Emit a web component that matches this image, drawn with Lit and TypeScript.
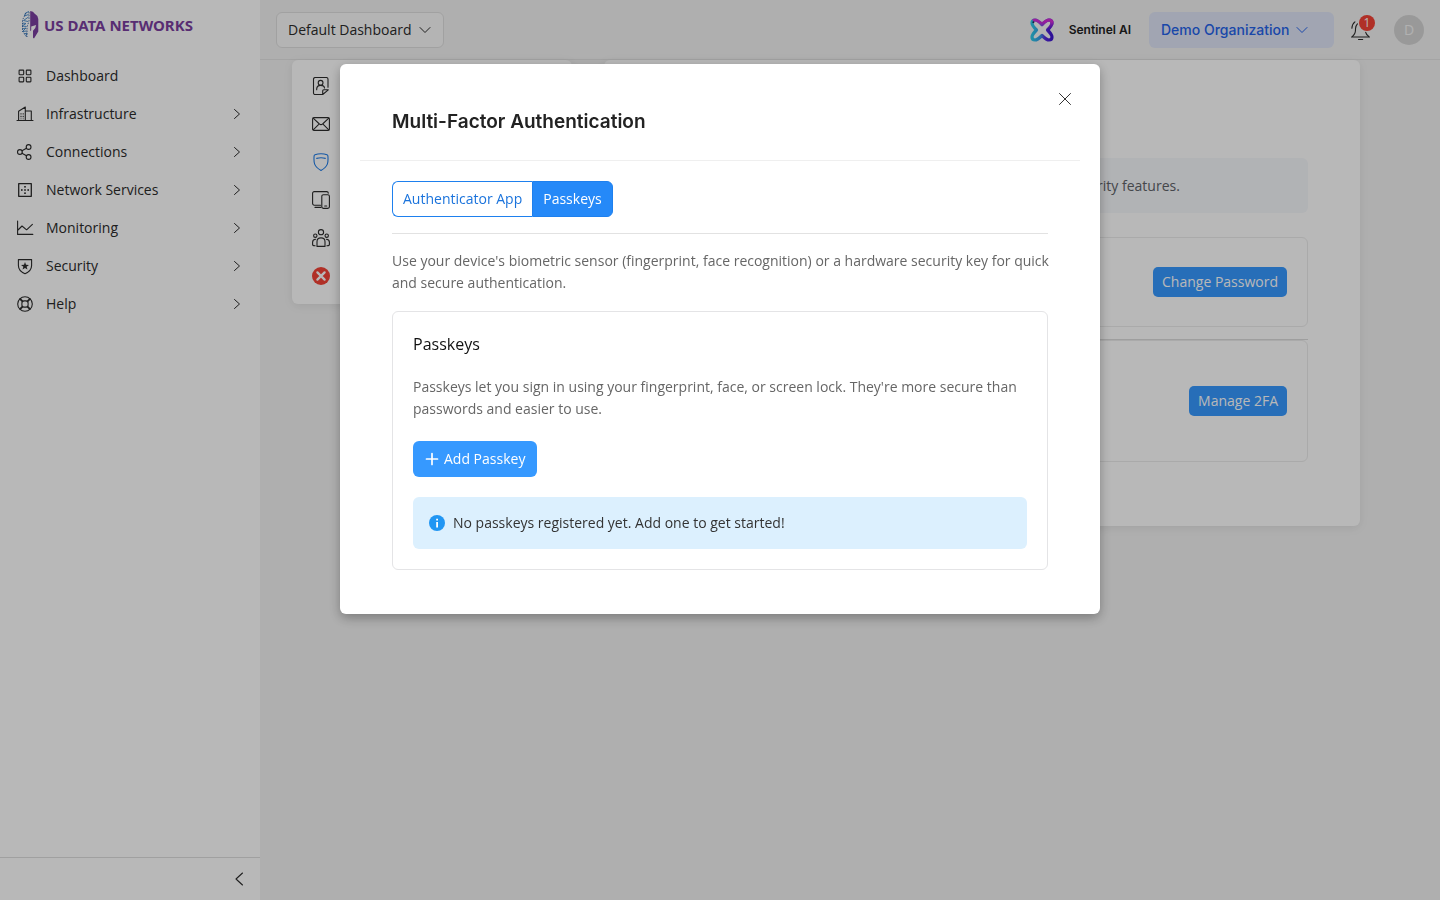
import { LitElement, html, css, svg, TemplateResult, SVGTemplateResult } from "lit";
import { customElement, state } from "lit/decorators.js";

const icon = (cls: string, size: number, body: SVGTemplateResult): TemplateResult => html`
  <svg class="icon ${cls}" width=${size} height=${size} viewBox="0 0 ${size} ${size}" aria-hidden="true">${body}</svg>
`;

const glyphs = {
  grid: svg`<rect x="3.1" y="3.1" width="4.6" height="4.6" rx=".6"/><rect x="10.3" y="3.1" width="4.6" height="4.6" rx=".6"/><rect x="3.1" y="10.3" width="4.6" height="4.6" rx=".6"/><rect x="10.3" y="10.3" width="4.6" height="4.6" rx=".6"/>`,
  building: svg`<path d="M1 15.5h16M2.6 15.5V6.2L9.3 2v13.5M9.3 6h6v9.5"/><path stroke-linecap="butt" stroke-dasharray="1.4 1.2" d="M5 8.2v6M7.2 8.2v6"/>`,
  share: svg`<circle cx="3.9" cy="9" r="2.4"/><circle cx="12.6" cy="4" r="2.4"/><circle cx="12.6" cy="14" r="2.4"/><path d="M6 7.8l4.5-2.6M6 10.2l4.5 2.6"/>`,
  network: svg`<rect x="2.7" y="2.7" width="12.6" height="12.6" stroke-width="1.3"/><g fill="currentColor" stroke="none"><rect x="8.2" y="5" width="1.6" height="1.6"/><rect x="8.2" y="8.2" width="1.6" height="1.6"/><rect x="8.2" y="11.4" width="1.6" height="1.6"/><rect x="5" y="8.2" width="1.6" height="1.6"/><rect x="11.4" y="8.2" width="1.6" height="1.6"/></g>`,
  chart: svg`<path d="M1.6 2v13.4h15.2M2 11l4-4 4.6 3.8 5.8-5.4"/>`,
  shieldStar: svg`<path d="M2.4 2.6h13.2v5.8c0 4-2.8 6.6-6.6 8.3-3.8-1.7-6.6-4.3-6.6-8.3z"/><path fill="currentColor" stroke="none" d="M9 5l1 2.8 3 .1-2.4 1.8.9 2.9L9 10.900l-2.500 1.700.9-2.900L5 7.900l3-.1z"/>`,
  buoy: svg`<circle cx="9" cy="9" r="7.3"/><rect x="5.9" y="5.9" width="6.2" height="6.2" rx="2.2"/><path d="M3.7 4.1l2.6 2.5M4.3 3.6l2.5 2.6M14.3 4.1l-2.6 2.5M13.7 3.6l-2.5 2.6M3.7 13.9l2.6-2.5M4.3 14.4l2.5-2.6M14.3 13.9l-2.6-2.5M13.7 14.4l-2.5-2.6"/>`,
  chevronRight: svg`<path d="M3.5 1.5l5 4.5-5 4.5"/>`,
  chevronDown: svg`<path d="M1 3.500l5 5 5-5"/>`,
  chevronLeft: svg`<path d="M11.5 2L5 8l6.5 6"/>`,
  profile: svg`<path d="M10.5 17.6H3.2A1.7 1.7 0 0 1 1.5 15.9V2.2A1.7 1.7 0 0 1 3.2.5h11.1a1.7 1.7 0 0 1 1.7 1.7v8M10.700 17.500v-3.700q0-1 1-1h4.600z"/><circle cx="8.6" cy="5.8" r="2.4"/><path d="M4.7 12.8v-.9q.2-3.5 3.9-3.5t3.9 2.6"/>`,
  mail: svg`<rect x=".6" y="2.6" width="16.8" height="12.8" rx="1.5"/><path d="M1.2 3.2L7.4 9q1.6 1.3 3.2 0l6.2-5.8M1.2 14.8L6.5 9.7M16.8 14.8l-5.3-5.1"/>`,
  shield: svg`<path d="M9 .8q-3.3 0-6 .9-.9.3-.9 1.3c-.5 6.4-.3 10.5 6.9 14.4 7.2-3.9 7.4-8 6.9-14.4q0-1-.9-1.3-2.7-.9-6-.9z"/><path d="M4.7 5.400q4.300-1.200 8.600 0"/>`,
  devices: svg`<path d="M8.5 14.2H2.2A1.6 1.6 0 0 1 .6 12.6V2.2A1.6 1.6 0 0 1 2.2.6h12.500a1.600 1.600 0 0 1 1.600 1.500M3 16.400h6"/><rect x="9.8" y="3.7" width="7.6" height="13.7" rx="1.6"/><path d="M12.7 15h2"/>`,
  team: svg`<circle cx="9" cy="3.2" r="2.6"/><circle cx="3.3" cy="6.7" r="1.7"/><circle cx="14.7" cy="6.7" r="1.7"/><path d="M5 17.4v-4.7q0-3.8 4-3.8t4 3.8v4.7zM3.6 10.3Q.6 10.5.6 13.3v2.1q0 1.3 2.5 1.3M14.4 10.300q3 .2 3 3v2.100q0 1.300-2.500 1.300"/>`,
  cancel: svg`<circle cx="9" cy="9" r="9" fill="#f44336" stroke="none"/><path stroke="#fff" stroke-width="2.3" d="M5.4 5.4l7.2 7.2M12.6 5.4l-7.2 7.2"/>`,
  bell: svg`<path d="M1.5 17h18M8.5 19.500h4.200M2.200 16.600Q5.800 14 5.500 8.800q.1-3 1.900-4.900M1.900 8.300Q2 4.200 4.900 1.900M19 16.600q-2.700-1.600-3.300-4.300"/>`,
  close: svg`<path d="M1.5 1.5l11 11M12.5 1.5l-11 11"/>`,
  plus: svg`<path stroke-width="1.7" d="M7 1.5v11M1.5 7h11"/>`,
  info: svg`<circle cx="8" cy="8" r="8" fill="#2196f3" stroke="none"/><path fill="#fff" stroke="none" d="M7.2 7h1.8v5.500H7.200zM7.200 3.700h1.800v1.700H7.200z"/>`,
};

const nav: { label: string; glyph: SVGTemplateResult; group: boolean }[] = [
  { label: "Dashboard", glyph: glyphs.grid, group: false },
  { label: "Infrastructure", glyph: glyphs.building, group: true },
  { label: "Connections", glyph: glyphs.share, group: true },
  { label: "Network Services", glyph: glyphs.network, group: true },
  { label: "Monitoring", glyph: glyphs.chart, group: true },
  { label: "Security", glyph: glyphs.shieldStar, group: true },
  { label: "Help", glyph: glyphs.buoy, group: true },
];

const settings: { label: string; glyph: SVGTemplateResult; active?: boolean }[] = [
  { label: "Profile", glyph: glyphs.profile },
  { label: "Email", glyph: glyphs.mail },
  { label: "Security", glyph: glyphs.shield, active: true },
  { label: "Devices", glyph: glyphs.devices },
  { label: "Teams", glyph: glyphs.team },
  { label: "Close", glyph: glyphs.cancel },
];

@customElement("app-root")
export class AppRoot extends LitElement {
  @state() private tab: "app" | "passkeys" = "passkeys";

  static styles = css`
    :host { display: block; font: 400 14px/22px "Open Sans", sans-serif; color: #2b2b2b; }
    *, *::before, *::after { box-sizing: border-box; }
    button, select { font: inherit; color: inherit; border: 0; background: none; cursor: pointer; }
    a { color: inherit; text-decoration: none; }
    h1, h2, p, ul { margin: 0; padding: 0; }
    ul { list-style: none; }
    .icon { display: block; flex: none; fill: none; stroke: currentColor; stroke-width: 1.1; stroke-linecap: round; stroke-linejoin: round; }

    .shell { display: grid; grid-template-columns: 260px minmax(0, 1fr); min-height: 100vh; background: #f3f3f3; }
    .sidebar { display: flex; flex-direction: column; background: #fff; }
    .brand { display: flex; align-items: center; gap: 4px; height: 50px; padding: 0 20px; }
    .brand-name { font: 700 15px/22px "Noto Sans", sans-serif; color: #7b3fa0; white-space: nowrap; }
    .nav { flex: 1; padding-top: 7px; }
    .nav-link { display: flex; align-items: center; gap: 12px; height: 38px; padding: 0 17px 0 16px; }
    .nav-label { flex: 1; }
    .thin { stroke-width: 1; }
    .collapse { display: flex; justify-content: flex-end; border-top: 1px solid #dedede; padding: 8px; }
    .collapse-button { padding: 5px; }

    .topbar { display: flex; align-items: center; height: 60px; padding: 0 16px; border-bottom: 1px solid #e3e3e3; }
    .picker { display: flex; align-items: center; gap: 7px; height: 36px; padding: 0 12px 0 11px; border-radius: 6px; }
    .picker-select { appearance: none; field-sizing: content; padding: 0; outline: 0; }
    .board { background: #fafafa; border: 1px solid #e0e0e0; }
    .org { width: 185px; padding: 0 12px; background: #dfe5f7; color: #2563eb; font: 500 14px/22px Inter, sans-serif; }
    .sentinel { display: flex; align-items: center; gap: 15px; margin: 0 18px 0 auto; font: 600 12px/22px Inter, sans-serif; color: #222; }
    .bell { position: relative; margin: 0 24px 0 16px; padding: 0; }
    .badge { position: absolute; top: -5px; right: -5px; width: 16px; height: 16px; border-radius: 50%; background: #f44336; color: #fff; font-size: 12px; line-height: 16px; text-align: center; }
    .avatar { width: 30px; height: 30px; padding: 0; border-radius: 50%; background: #d5d5d5; color: #f5f5f5; }

    .content { display: grid; grid-template-columns: 280px minmax(0, 1fr); align-items: start; gap: 32px; padding: 0 80px 32px 32px; }
    .card { background: #fff; border-radius: 6px; box-shadow: 0 2px 10px rgba(0, 0, 0, .08); }
    .settings { padding: 7px 0 9px; }
    .settings-link { display: flex; align-items: center; height: 38px; padding: 0 20px; }
    .active { color: #1e7be6; }
    .security { padding: 36px 52px 64px; }
    .page-title { height: 62px; font-size: 18px; font-weight: 600; }
    .notice { margin-bottom: 24px; padding: 16px 20px; border-radius: 6px; background: #f6f8fb; color: #5f6368; line-height: 23px; white-space: nowrap; }
    .row { display: flex; align-items: center; justify-content: flex-end; min-height: 90px; padding: 20px; border: 1px solid #ececec; border-radius: 6px; }
    .row.tall { min-height: 122px; }
    .rule { margin: 12px 0 0; border: 0; border-top: 1px solid #dcdcdc; }
    .small-button { height: 30px; padding: 0 9px; border-radius: 5px; background: #3699ff; color: #fff; white-space: nowrap; }

    .overlay { position: fixed; inset: 0; display: flex; align-items: flex-start; justify-content: center; padding: 64px 20px; background: rgba(0, 0, 0, .28); }
    .modal { position: relative; width: 100%; max-width: 760px; padding: 20px; border-radius: 6px; background: #fff; box-shadow: 0 4px 12px rgba(0, 0, 0, .3); }
    .modal-head { padding: 25px 32px 26px; border-bottom: 1px solid #efefef; }
    .modal-title { font: 600 19px/25px Inter, sans-serif; color: #222; }
    .modal-close { position: absolute; top: 20px; right: 20px; padding: 8px; color: #333; }
    .modal-body { padding: 20px 32px 24px; color: #666; }
    .intro { margin-right: -8px; }
    .tabs { display: flex; }
    .tab { height: 36px; padding: 0 10px; border: 1px solid #1e80ee; color: #1a73dc; background: #fff; }
    .tab:first-child { border-radius: 6px 0 0 6px; border-right: 0; }
    .tab:last-child { border-radius: 0 6px 6px 0; }
    .tab.selected { background: #2589f8; color: #fff; }
    .divider { margin: 16px 0; border: 0; border-top: 1px solid #e2e2e2; }
    .panel { display: flex; flex-direction: column; align-items: flex-start; gap: 20px; margin-top: 17px; padding: 20px; border: 1px solid #e4e4e6; border-radius: 6px; }
    .panel-title { font-size: 16px; line-height: 24px; font-weight: 400; color: #111; }
    .panel-text { margin-bottom: 1px; }
    .add { display: flex; align-items: center; gap: 5px; height: 36px; padding: 0 12px; border-radius: 6px; background: #3699ff; color: #fff; }
    .info { display: flex; align-items: center; gap: 8px; width: 100%; padding: 15px 16px; border-radius: 6px; background: #dcf0fe; color: #333; }
  `;

  private logo() {
    return html`<svg width="20" height="30" viewBox="0 0 20 30" aria-hidden="true">
      <path fill="#7b3fa0" d="M10.200 1q3.300 0 4.300 2.500 3 1.500 3.800 5.500v12.500L14 28.500l-1-.8v-6.900l2.300-2.900.8-3-4.900 1.700v3.600l-1 1z"/>
      <g fill="none" stroke="#3f86c8" stroke-width=".9">
        <path d="M9 1.500L5.500 3 4.500 6l4-1.500M8.500 7L3.500 10.500 8 11.500M2.500 13L6 13.500 2 16l4.500.5M2 19l4-1-3.500 3.500 4-.5M4 24l3-1-1 3"/>
      </g>
      <path fill="none" stroke="#26569b" stroke-width=".8" stroke-dasharray="1.500 1.200" d="M6 3L2.500 10v11l4.500 6.500M9 2v9L7 17v10"/>
    </svg>`;
  }

  private sentinelMark() {
    return html`<svg width="24" height="24" viewBox="0 0 24 24" aria-hidden="true">
      <defs>
        <linearGradient id="mark" gradientUnits="userSpaceOnUse" x1="2" y1="12" x2="22" y2="12">
          <stop offset="0" stop-color="#2ec8e8"/><stop offset=".4" stop-color="#3a9be8"/>
          <stop offset=".65" stop-color="#5a2be0"/><stop offset="1" stop-color="#3d14d0"/>
        </linearGradient>
        <linearGradient id="crown" gradientUnits="userSpaceOnUse" x1="0" y1="2" x2="0" y2="12">
          <stop offset=".2" stop-color="#d52bd8"/><stop offset="1" stop-color="#9a2be0" stop-opacity="0"/>
        </linearGradient>
      </defs>
      <path fill="#fff" fill-opacity=".55" stroke="url(#mark)" stroke-width="3.200" stroke-linejoin="round" d="M5 2Q7.500 2 12 6.500 16.500 2 19 2q3 0 3 3 0 2.500-4.500 7Q22 16.500 22 19q0 3-3 3-2.500 0-7-4.500Q7.500 22 5 22q-3 0-3-3 0-2.500 4.500-7Q2 7.500 2 5q0-3 3-3z"/>
      <path fill="none" stroke="url(#crown)" stroke-width="3.200" stroke-linejoin="round" d="M3 2.700Q3.900 2 5 2q2.500 0 7 4.500Q16.500 2 19 2q3 0 3 3 0 2.500-4.500 7"/>
      <circle cx="3.400" cy="4.200" r="1" fill="#1c2a5a"/>
    </svg>`;
  }

  render() {
    return html`
      <div class="shell">
        <aside class="sidebar">
          <a class="brand" href="#">${this.logo()}<span class="brand-name">US DATA NETWORKS</span></a>
          <nav class="nav" aria-label="Main">
            <ul>
              ${nav.map((n) => html`<li><a class="nav-link" href="#">
                ${icon("", 18, n.glyph)}<span class="nav-label">${n.label}</span>
                ${n.group ? icon("thin", 12, glyphs.chevronRight) : ""}
              </a></li>`)}
            </ul>
          </nav>
          <div class="collapse"><button class="collapse-button" aria-label="Collapse sidebar">${icon("", 16, glyphs.chevronLeft)}</button></div>
        </aside>
        <div class="main">
          <header class="topbar">
            <label class="picker board">
              <select class="picker-select" aria-label="Dashboard"><option>Default Dashboard</option></select>
              ${icon("thin", 12, glyphs.chevronDown)}
            </label>
            <a class="sentinel" href="#">${this.sentinelMark()}<span>Sentinel AI</span></a>
            <label class="picker org">
              <select class="picker-select" aria-label="Organization"><option>Demo Organization</option></select>
              ${icon("thin", 12, glyphs.chevronDown)}
            </label>
            <button class="bell" aria-label="Notifications">${icon("", 20, glyphs.bell)}<span class="badge">1</span></button>
            <button class="avatar" aria-label="Account">D</button>
          </header>
          <main class="content">
            <nav class="card settings" aria-label="Settings">
              <ul>
                ${settings.map((s) => html`<li><a class="settings-link ${s.active ? "active" : ""}" href="#" aria-label=${s.label}>
                  ${icon("", 18, s.glyph)}
                </a></li>`)}
              </ul>
            </nav>
            <section class="card security">
              <h1 class="page-title">Security</h1>
              <p class="notice">Manage your password, sign-in methods and other account security features.</p>
              <div class="row"><button class="small-button">Change Password</button></div>
              <hr class="rule" />
              <div class="row tall"><button class="small-button">Manage 2FA</button></div>
            </section>
          </main>
        </div>
      </div>
      <div class="overlay">
        <section class="modal" role="dialog" aria-modal="true" aria-labelledby="title">
          <button class="modal-close" aria-label="Close">${icon("thin", 14, glyphs.close)}</button>
          <header class="modal-head"><h2 class="modal-title" id="title">Multi-Factor Authentication</h2></header>
          <div class="modal-body">
            <div class="tabs" role="tablist">
              <button class="tab ${this.tab === "app" ? "selected" : ""}" role="tab" @click=${() => (this.tab = "app")}>Authenticator App</button>
              <button class="tab ${this.tab === "passkeys" ? "selected" : ""}" role="tab" @click=${() => (this.tab = "passkeys")}>Passkeys</button>
            </div>
            <hr class="divider" />
            <p class="intro">Use your device's biometric sensor (fingerprint, face recognition) or a hardware security key for quick and secure authentication.</p>
            <div class="panel">
              <h2 class="panel-title">Passkeys</h2>
              <p class="panel-text">Passkeys let you sign in using your fingerprint, face, or screen lock. They're more secure than passwords and easier to use.</p>
              <button class="add">${icon("", 14, glyphs.plus)}Add Passkey</button>
              <div class="info">${icon("", 16, glyphs.info)}<span>No passkeys registered yet. Add one to get started!</span></div>
            </div>
          </div>
        </section>
      </div>
    `;
  }
}
